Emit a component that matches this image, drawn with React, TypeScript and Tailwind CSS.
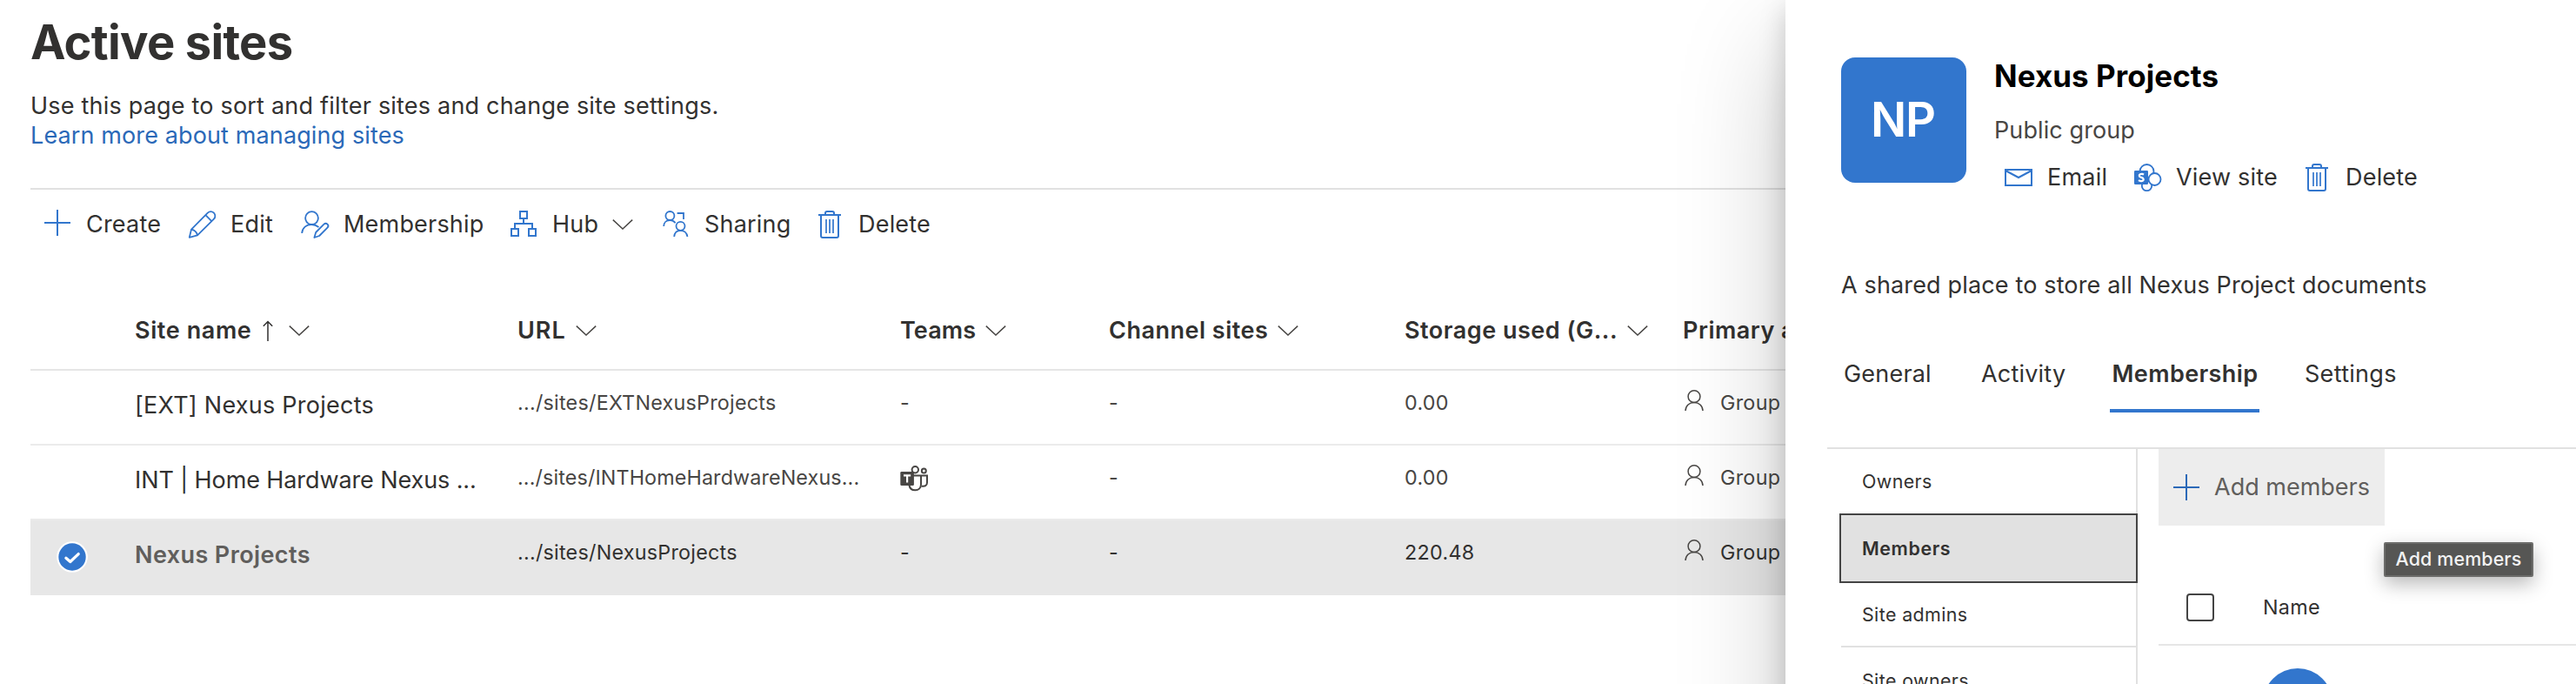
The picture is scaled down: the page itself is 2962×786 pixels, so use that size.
import React, { type ReactNode } from "react";

type IconProps = { className?: string };

function Svg({ className = "", children }: { className?: string; children: ReactNode }) {
  return (
    <svg viewBox="0 0 32 32" className={`size-8 shrink-0 overflow-visible ${className}`} fill="none" stroke="currentColor" strokeWidth="2">
      {children}
    </svg>
  );
}

const PlusIcon = ({ className }: IconProps) => (
  <Svg className={className}>
    <path d="M16 0V30M1 15H31" />
  </Svg>
);

const PencilIcon = () => (
  <Svg>
    <path d="M1.8 30.8L4 21.6L22.8 2.6A5 5 0 0 1 29.9 9.7L11 28.4Z" strokeLinejoin="round" strokeWidth="1.8" />
    <path d="M20.4 5.2L27.3 12.1M4 21.6C7.5 22 10.5 25 11 28.4" strokeWidth="1.8" />
  </Svg>
);

const PersonEditIcon = () => (
  <Svg>
    <circle cx="12.5" cy="8.6" r="7.4" strokeWidth="1.8" />
    <path d="M1.2 26C1.5 19.5 6.5 16 12 16C15.2 16 18 17 20.5 19" strokeWidth="1.8" />
    <path d="M15.4 31L17.2 25L26.5 15.7A2.8 2.8 0 0 1 30.5 19.7L21.2 29Z" strokeWidth="1.8" strokeLinejoin="round" />
  </Svg>
);

const HubIcon = () => (
  <Svg>
    <path d="M12 1H20V9H12ZM2 21H10V29H2ZM22 21H30V29H22ZM16 9V15M6 21V15H26V21" />
  </Svg>
);

const SharingIcon = () => (
  <Svg>
    <circle cx="9.4" cy="6" r="5" strokeWidth="1.8" />
    <path d="M2.2 18C2.2 13.5 5.5 11 9.4 11C12 11 14 12.2 15.6 14.2" strokeWidth="1.8" />
    <path d="M17.6 3H25V10" strokeWidth="1.8" />
    <circle cx="21.5" cy="17.8" r="5" strokeWidth="1.8" />
    <path d="M14.2 30C14.6 25.5 17.5 22.8 21.5 22.8S28.8 25.5 29.4 30" strokeWidth="1.8" />
  </Svg>
);

const TrashIcon = () => (
  <Svg>
    <path d="M3 5H29M11 4.5V3Q11 1 13 1H19Q21 1 21 3V4.5M6 5V29Q6 31 8 31H24Q26 31 26 29V5" />
    <path d="M12 10V26M16 10V26M20 10V26" strokeWidth="1.7" />
  </Svg>
);

const MailIcon = () => (
  <Svg>
    <path d="M1 7H31V25H1ZM1 8L16 16L31 8" />
  </Svg>
);

const SharePointIcon = () => (
  <Svg>
    <circle cx="15.5" cy="9" r="8" strokeWidth="1.8" />
    <circle cx="15.5" cy="25.5" r="5.7" strokeWidth="1.8" />
    <circle cx="24.5" cy="18" r="7" fill="white" strokeWidth="1.8" />
    <rect x="1" y="8" width="16" height="16" rx="1.3" fill="currentColor" stroke="none" />
    <path d="M12 12.6C10.5 11.5 6.8 11.6 6.8 13.9C6.8 16.2 11.7 15.5 11.7 18C11.7 20.6 7.8 20.5 6 19.2" stroke="white" strokeWidth="2.2" />
  </Svg>
);

const TeamsIcon = () => (
  <Svg className="text-[#484644]">
    <circle cx="17.3" cy="5.8" r="3.7" />
    <circle cx="27.3" cy="7" r="2.5" />
    <path d="M14 12.6H31V20.5C31 24 28.5 25.3 24.5 24.5" />
    <path d="M24 12.6V22.5C24 27 21 29.3 17.4 29.3C13.8 29.3 11 27 10.4 23.5" />
    <rect x="0.3" y="8" width="15.6" height="16" rx="1.3" fill="currentColor" stroke="none" />
    <path d="M4 12.4H12.2M8.1 12.4V20.4" stroke="white" strokeWidth="2.2" />
  </Svg>
);

const PersonIcon = () => (
  <svg viewBox="0 0 22 24" className="h-6 w-[22px] shrink-0 text-[#484644]" fill="none" stroke="currentColor" strokeWidth="1.5">
    <circle cx="11" cy="7.7" r="6.9" />
    <path d="M1 24C1.3 18 5.5 14.6 11 14.6S20.7 18 21 24" />
  </svg>
);

const Chevron = ({ className = "" }: IconProps) => (
  <svg viewBox="0 0 24 12" className={`h-3 w-6 shrink-0 text-[#484644] ${className}`} fill="none" stroke="currentColor" strokeWidth="1.5">
    <path d="M0.8 0.6L12 11L23.2 0.6" />
  </svg>
);

const SortArrow = () => (
  <svg viewBox="0 0 12 24" className="ml-[13px] mr-[7px] h-6 w-3 shrink-0 text-[#323130]" fill="none" stroke="currentColor" strokeWidth="1.5">
    <path d="M6 24V1.5M0.8 6.7L6 1.5L11.2 6.7" />
  </svg>
);

const CheckBadge = () => (
  <svg viewBox="0 0 36 36" className="ml-[30px] size-9">
    <circle cx="18" cy="18" r="17.8" fill="white" />
    <circle cx="18" cy="18" r="15.7" fill="#3276cd" />
    <path d="M10.9 19.3L15.8 23.5L25.2 14.6" fill="none" stroke="white" strokeWidth="3.3" strokeLinecap="round" strokeLinejoin="round" />
  </svg>
);

function Command({ icon, label, className = "" }: { icon: ReactNode; label: string; className?: string }) {
  return (
    <div className={`flex shrink-0 items-center gap-[17px] text-[#3276cd] ${className}`}>
      {icon}
      <span className="text-[27px] tracking-[0.2px] text-[#323130]">{label}</span>
    </div>
  );
}

const columns: { label: string; width: string; tracking: string; sorted?: boolean }[] = [
  { label: "Site name", width: "w-[440px]", tracking: "tracking-[0.6px]", sorted: true },
  { label: "URL", width: "w-[440px]", tracking: "tracking-[1px]" },
  { label: "Teams", width: "w-[240px]", tracking: "tracking-[0.1px]" },
  { label: "Channel sites", width: "w-[340px]", tracking: "tracking-[0.5px]" },
  { label: "Storage used (G...", width: "w-[320px]", tracking: "tracking-[0.5px]" },
  { label: "Primary admin", width: "w-[320px]", tracking: "tracking-[0.5px]" },
];

const sites = [
  { name: "[EXT] Nexus Projects", nameTracking: "tracking-[0.25px]", url: ".../sites/EXTNexusProjects", urlTracking: "tracking-[0.25px]", teams: false, storage: "0.00", selected: false },
  { name: "INT | Home Hardware Nexus ...", nameTracking: "tracking-[-0.1px]", url: ".../sites/INTHomeHardwareNexus...", urlTracking: "tracking-[0.13px]", teams: true, storage: "0.00", selected: false },
  { name: "Nexus Projects", nameTracking: "tracking-[0.4px]", url: ".../sites/NexusProjects", urlTracking: "tracking-[0.25px]", teams: false, storage: "220.48", selected: true },
];

function SitesTable() {
  return (
    <div className="mt-[38px] w-[2220px]">
      <div className="flex h-[90px] items-center border-b-2 border-[#e6e6e6] pl-[120px] text-[27px] font-semibold text-[#323130]">
        {columns.map((c) => (
          <div key={c.label} className={`flex shrink-0 items-center whitespace-nowrap ${c.width}`}>
            <span className={c.tracking}>{c.label}</span>
            {c.sorted && <SortArrow />}
            <Chevron className="ml-[11px]" />
          </div>
        ))}
      </div>
      {sites.map((s) => (
        <div
          key={s.name}
          className={`flex h-[86px] items-center whitespace-nowrap border-b-2 text-[23.3px] tracking-[0.3px] ${
            s.selected ? "border-[#e7e7e7] bg-[#e7e7e7] text-[#323130]" : "border-[#ebebeb] text-[#484644]"
          }`}
        >
          <div className="w-[120px] shrink-0">{s.selected && <CheckBadge />}</div>
          <div className={`w-[440px] shrink-0 pb-1 text-[27px] ${s.nameTracking} ${s.selected ? "font-semibold text-[#605e5c]" : "text-[#323130]"}`}>{s.name}</div>
          <div className={`w-[440px] shrink-0 pb-[9px] ${s.urlTracking}`}>{s.url}</div>
          <div className="w-[240px] shrink-0 pb-[9px]">{s.teams ? <TeamsIcon /> : "-"}</div>
          <div className="w-[340px] shrink-0 pb-[9px]">-</div>
          <div className="w-[320px] shrink-0 pb-[9px]">{s.storage}</div>
          <div className="flex shrink-0 items-center pl-[2px]">
            <div className="pb-[17px]">
              <PersonIcon />
            </div>
            <span className="ml-[19px] pb-[9px] tracking-[0.3px]">Group owners</span>
          </div>
        </div>
      ))}
    </div>
  );
}

function MembersNav() {
  const plain = "ml-[2px] flex items-center border-r-2 border-[#e1e1e1] pl-6";
  return (
    <nav className="flex w-[343px] shrink-0 flex-col text-[21.4px] text-[#323130]">
      <div className={`${plain} h-[74px] tracking-[0.4px]`}>Owners</div>
      <div className="flex h-20 items-center border-2 border-[#444444] bg-[#e1e1e1] pl-6 font-semibold tracking-[0.6px]">Members</div>
      <div className={`${plain} h-[74px] border-b-2 tracking-[0.4px]`}>Site admins</div>
      <div className={`${plain} h-[76px] tracking-[0.4px]`}>Site owners</div>
    </nav>
  );
}

function DetailsPanel() {
  return (
    <aside className="relative z-10 h-[1100px] w-[1100px] shrink-0 bg-white shadow-[0_51px_115px_0_rgba(0,0,0,0.22),0_10px_29px_0_rgba(0,0,0,0.18)]">
      <div className="flex h-[311px] pl-16 pt-[66px]">
        <div className="flex size-36 items-center justify-center rounded-[16px] bg-[#3276cd] pr-[2px] text-[54.3px] font-semibold tracking-[-1px] text-white">NP</div>
        <div className="ml-8 flex flex-col">
          <h2 className="h-[42px] text-[34.9px] font-bold leading-[42px] tracking-[0.1px] text-black">Nexus Projects</h2>
          <p className="mt-[25px] text-[27px] leading-[34px] tracking-[0.1px] text-[#484644]">Public group</p>
          <div className="mt-[17px] flex h-10 pl-3">
            <Command icon={<MailIcon />} label="Email" className="w-[148px]" />
            <Command icon={<SharePointIcon />} label="View site" className="w-[195px]" />
            <Command icon={<TrashIcon />} label="Delete" />
          </div>
        </div>
      </div>
      <p className="pl-[64px] text-[27px] leading-[34px] tracking-[0.15px] text-[#323130]">A shared place to store all Nexus Project documents</p>
      <div className="mt-[45px] flex h-[84px] items-stretch pl-[67px] text-[27px] tracking-[0.2px] text-[#323130]">
        <div className="flex w-[158px] items-center pb-1">General</div>
        <div className="flex w-[148px] items-center pb-1">Activity</div>
        <div className="flex w-[172px] items-center justify-center border-b-4 border-[#3276cd] pl-[1px] font-semibold tracking-[0.4px]">Membership</div>
        <div className="ml-[52px] flex items-center pb-1 tracking-[0.3px]">Settings</div>
      </div>
      <div className="ml-12 mt-10 border-t-2 border-[#e1e1e1]" />
      <div className="flex pl-[62px]">
        <MembersNav />
        <div className="ml-6 flex flex-1 flex-col">
          <div className="relative flex h-[88px] w-[260px] items-center bg-[#ededed] pl-4">
            <PlusIcon className="mt-[2px] text-[#2b69b8]" />
            <span className="ml-4 whitespace-nowrap text-[27px] text-[#605e5c]">Add members</span>
            <div
              role="tooltip"
              className="absolute left-[259px] top-[107px] flex h-10 w-[172px] items-center justify-center whitespace-nowrap rounded-[2px] border-2 border-[#6c6c6a] bg-[#565654] text-[21.4px] font-medium leading-none tracking-[0.15px] text-[#f2f2f2] shadow-[0_8px_22px_rgba(0,0,0,0.28)]"
            >
              Add members
            </div>
          </div>
          <div className="flex h-[138px] items-end border-b-2 border-[#e6e6e6] pb-[26px]">
            <div className="ml-8 size-8 rounded-[4px] border-2 border-[#444444]" />
            <span className="ml-14 text-[23.3px] leading-8 tracking-[0.3px] text-[#323130]">Name</span>
          </div>
          <div className="ml-[120px] mt-[26px] size-20 rounded-full bg-[#3276cd]" />
        </div>
      </div>
    </aside>
  );
}

export default function App() {
  return (
    <div className="flex h-[786px] w-[2962px] overflow-hidden bg-white font-['Inter',sans-serif]">
      <main className="h-[786px] w-[2053px] shrink-0 overflow-hidden pl-[35px] pt-[18px]">
        <h1 className="text-[54.3px] font-bold leading-[60px] tracking-[-0.7px] text-[#323130]">Active sites</h1>
        <p className="mt-[27px] text-[27px] leading-[34px] tracking-[0.2px] text-[#323130]">Use this page to sort and filter sites and change site settings.</p>
        <a className="block text-[27px] leading-[34px] tracking-[0.12px] text-[#2b69b8]">Learn more about managing sites</a>
        <div className="mt-[43px] flex h-[82px] border-t-2 border-[#e1e1e1] pl-[15px]">
          <Command icon={<PlusIcon className="mt-[-2px]" />} label="Create" className="w-[166px]" />
          <Command icon={<PencilIcon />} label="Edit" className="w-[130px]" />
          <Command icon={<PersonEditIcon />} label="Membership" className="w-[240px]" />
          <div className="flex w-[175px] shrink-0 items-center">
            <Command icon={<HubIcon />} label="Hub" />
            <Chevron className="ml-4" />
          </div>
          <Command icon={<SharingIcon />} label="Sharing" className="w-[177px]" />
          <Command icon={<TrashIcon />} label="Delete" />
        </div>
        <SitesTable />
      </main>
      <DetailsPanel />
    </div>
  );
}
